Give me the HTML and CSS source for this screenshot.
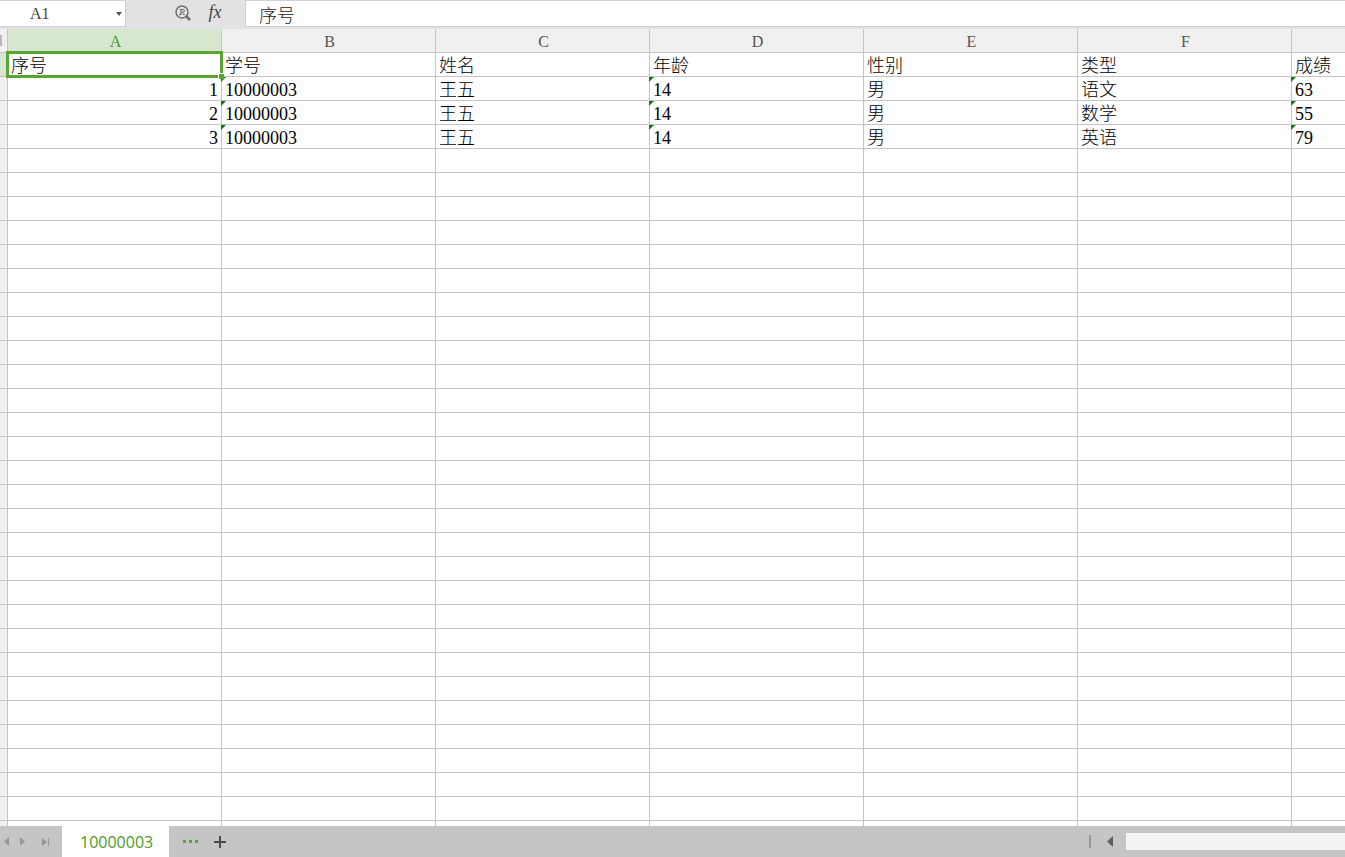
FILE: index.html
```
<!DOCTYPE html>
<html lang="zh-CN">
<head>
  <meta charset="UTF-8">
  <title>10000003</title>
  <link rel="stylesheet" href="styles.css">
</head>
<body>

  <!-- Barra de fórmulas -->
  <div class="formula-bar">
    <div class="name-box">
      <input class="name-input" type="text" value="A1" aria-label="名称框">
      <button class="name-arrow" aria-label="名称列表">
        <svg width="6" height="4" viewBox="0 0 6 4"><path d="M0 0h6L3 4z" fill="#555"/></svg>
      </button>
    </div>
    <div class="formula-tools">
      <button class="tool-btn" aria-label="查找">
        <svg width="16" height="16" viewBox="0 0 16 16" fill="none" stroke="#707070">
          <circle cx="7" cy="7" r="6" stroke-width="1.5"/>
          <path d="M11 11l4 4" stroke-width="2.6"/>
          <path d="M4 9.500h2.500M5.500 9.500L6.300 4.500M4.800 4.500h3.400a1.300 1.300 0 0 1 0 2.600H6M7.300 7.200L8.500 9.500h1.500" stroke-width="1"/>
        </svg>
      </button>
      <button class="tool-btn fx-btn" aria-label="插入函数">fx</button>
    </div>
    <input class="formula-input" type="text" value="序号" aria-label="编辑栏">
  </div>

  <!-- Hoja -->
  <div class="sheet">
    <table class="grid">
      <colgroup>
        <col class="col-num">
        <col class="col-data"><col class="col-data"><col class="col-data"><col class="col-data">
        <col class="col-data"><col class="col-data"><col class="col-data">
      </colgroup>
      <thead>
        <tr>
          <th class="corner"></th>
          <th class="active">A</th><th>B</th><th>C</th><th>D</th><th>E</th><th>F</th><th></th>
        </tr>
      </thead>
      <tbody id="filas">
        <tr>
          <th class="active"></th>
          <td class="selected">序号</td><td>学号</td><td>姓名</td><td>年龄</td><td>性别</td><td>类型</td><td>成绩</td>
        </tr>
        <tr>
          <th></th>
          <td class="num">1</td><td class="as-text">10000003</td><td>王五</td><td class="as-text">14</td><td>男</td><td>语文</td><td class="as-text">63</td>
        </tr>
        <tr>
          <th></th>
          <td class="num">2</td><td class="as-text">10000003</td><td>王五</td><td class="as-text">14</td><td>男</td><td>数学</td><td class="as-text">55</td>
        </tr>
        <tr>
          <th></th>
          <td class="num">3</td><td class="as-text">10000003</td><td>王五</td><td class="as-text">14</td><td>男</td><td>英语</td><td class="as-text">79</td>
        </tr>
      </tbody>
    </table>
  </div>

  <!-- Pestañas -->
  <div class="tab-bar">
    <div class="tab-nav">
      <button class="nav-btn" aria-label="上一个">
        <svg width="5" height="9" viewBox="0 0 5 9"><path d="M5 0v9L0 4.500z" fill="#979797"/></svg>
      </button>
      <button class="nav-btn" aria-label="下一个">
        <svg width="5" height="9" viewBox="0 0 5 9"><path d="M0 0v9l5-4.500z" fill="#979797"/></svg>
      </button>
      <button class="nav-btn nav-last" aria-label="最后一个">
        <svg width="7" height="8" viewBox="0 0 7 8"><path d="M0 0v8l5-4zM6 0h1v8H6z" fill="#979797"/></svg>
      </button>
    </div>
    <button class="tab">10000003</button>
    <button class="tab-btn" aria-label="更多工作表">
      <svg width="15" height="3" viewBox="0 0 15 3"><path d="M0 0h3v3H0zM6 0h3v3H6zM12 0h3v3h-3z" fill="#5aa532"/></svg>
    </button>
    <button class="tab-btn" aria-label="新建工作表">
      <svg width="12" height="12" viewBox="0 0 12 12"><path d="M5 0h2v5h5v2H7v5H5V7H0V5h5z" fill="#4c4c4c"/></svg>
    </button>
    <div class="scroll">
      <span class="splitter"></span>
      <button class="nav-btn" aria-label="向左滚动">
        <svg width="6" height="11" viewBox="0 0 6 11"><path d="M6 0v11L0 5.500z" fill="#5f5f5f"/></svg>
      </button>
      <div class="scroll-thumb"></div>
    </div>
  </div>

  <script>
    // Filas vacías hasta llenar la hoja
    const filas = document.getElementById('filas');
    const alto = document.querySelector('.sheet').clientHeight;
    while (filas.parentNode.offsetHeight < alto) {
      const fila = filas.insertRow();
      fila.appendChild(document.createElement('th'));
      for (let i = 0; i < 7; i++) {
        fila.insertCell();
      }
    }
  </script>

</body>
</html>
```
FILE: styles.css
```
* {
  box-sizing: border-box;
}
body {
  margin: 0;
  height: 100vh;
  display: flex;
  flex-direction: column;
  overflow: hidden;
  background-color: white;
  font-family: "Liberation Serif", "Noto Sans CJK SC", serif;
  font-size: 18px;
  font-weight: 300;
}
button,
input {
  border: none;
  padding: 0;
  margin: 0;
  background: none;
  font: inherit;
  outline: none;
}
button {
  display: flex;
  align-items: center;
  justify-content: center;
  cursor: pointer;
}

/* barra de fórmulas */
.formula-bar {
  display: flex;
  flex: none;
  height: 29px;
  padding-bottom: 2px;
  background-color: #e2e2e5;
}
.name-box {
  display: flex;
  width: 126px;
  background-color: white;
  border: 1px solid #cfcfd4;
  border-left: none;
}
.name-input {
  flex: 1;
  min-width: 0;
  padding-left: 30px;
  font-size: 16px;
  color: #444;
}
.name-arrow {
  width: 12px;
}
.formula-tools {
  display: flex;
  width: 119px;
  padding-left: 49px;
  gap: 16px;
}
.tool-btn {
  width: 16px;
  height: 25px;
}
.fx-btn {
  font-size: 18px;
  font-style: italic;
  color: #444;
}
.formula-input {
  flex: 1;
  min-width: 0;
  padding-left: 13px;
  background-color: white;
  border: 1px solid #cfcfd4;
  border-right: none;
  color: #222;
}

/* hoja */
.sheet {
  flex: 1;
  min-height: 0;
  overflow: hidden;
}
.grid {
  width: 1506px;
  table-layout: fixed;
  border-collapse: separate;
  border-spacing: 0;
}
.col-num {
  width: 8px;
}
.col-data {
  width: 214px;
}
.grid th,
.grid td {
  height: 24px;
  padding: 2px 3px 0;
  border-right: 1px solid #c4c4c4;
  border-bottom: 1px solid #c4c4c4;
  line-height: 20px;
  white-space: nowrap;
}
.grid th {
  padding: 3px 2px 0 4px;
  background-color: #f0f0f0;
  font-size: 16px;
  font-weight: normal;
  color: #555;
}
.grid td {
  position: relative;
  color: black;
}
.grid th.active {
  background-color: #d7e7cf;
  color: #3c9a1e;
}
.grid .corner {
  background-image: linear-gradient(#b8b8b8, #b8b8b8);
  background-size: 2px 11px;
  background-position: left center;
  background-repeat: no-repeat;
}
.grid .num {
  text-align: right;
}
/* número guardado como texto */
.as-text::before {
  content: "";
  position: absolute;
  top: 0;
  left: -1px;
  width: 5px;
  height: 5px;
  background-color: #0a7d0a;
  clip-path: polygon(0 0, 100% 0, 0 100%);
}
/* celda seleccionada */
.selected::before {
  content: "";
  position: absolute;
  z-index: 1;
  top: -2px;
  left: -2px;
  right: -2px;
  bottom: -2px;
  border: 3px solid #5aa532;
}
.selected::after {
  content: "";
  position: absolute;
  z-index: 2;
  right: -3px;
  bottom: -3px;
  width: 5px;
  height: 5px;
  background-color: #5aa532;
  border-top: 1px solid white;
  border-left: 1px solid white;
  box-sizing: content-box;
}

/* pestañas */
.tab-bar {
  display: flex;
  flex: none;
  height: 31px;
  background-color: #c5c5c7;
}
.tab-nav {
  display: flex;
  align-items: center;
  width: 62px;
  padding-left: 4px;
  gap: 11px;
}
.nav-last {
  margin-left: 6px;
}
.tab {
  padding: 1px 16px 0 18px;
  background-color: white;
  font-family: "Open Sans", sans-serif;
  font-size: 16px;
  font-weight: normal;
  color: #4f9a2c;
}
.tab-btn {
  width: 15px;
  margin-left: 14px;
}
.scroll {
  display: flex;
  align-items: center;
  width: 256px;
  margin-left: auto;
}
.splitter {
  width: 2px;
  height: 13px;
  margin-right: 16px;
  background-color: #999;
}
.scroll-thumb {
  flex: 1;
  height: 17px;
  margin-left: 13px;
  background-color: #f3f3f3;
}
```
